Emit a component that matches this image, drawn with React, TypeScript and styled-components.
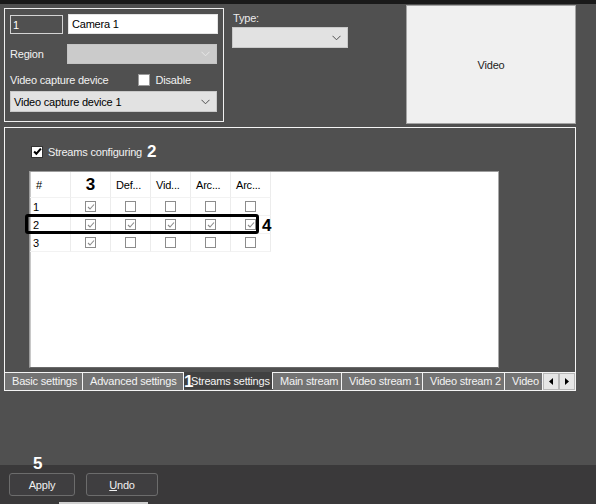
import React from 'react';
import styled, { createGlobalStyle } from 'styled-components';

const GlobalStyle = createGlobalStyle`
  body {
    margin: 0;
    background: #505050;
    font-family: "Liberation Sans", Arial, sans-serif;
    font-size: 11px;
    letter-spacing: -0.2px;
  }
  * { box-sizing: border-box; }
`;

const Window = styled.div`
  width: 596px;
  height: 504px;
  display: flex;
  flex-direction: column;
  background: #505050;
  overflow: hidden;
`;

const TopEdge = styled.div`
  height: 4px;
  background: #1a1a1a;
`;

const TopRow = styled.div`
  display: flex;
  align-items: flex-start;
  margin-top: 1px;
  height: 119px;
`;

const GroupBox = styled.div`
  margin: 3px 0 0 4px;
  width: 220px;
  height: 114px;
  border: 1px solid #f0f0f0;
  padding: 5px 0 0 5px;
  display: flex;
  flex-direction: column;
`;

const FieldRow = styled.div<{ $top?: number }>`
  display: flex;
  align-items: center;
  margin-top: ${p => p.$top ?? 0}px;
`;

const Label = styled.span<{ $width?: number }>`
  color: #f2f2f2;
  font-size: 11px;
  width: ${p => (p.$width ? `${p.$width}px` : 'auto')};
  white-space: nowrap;
`;

const IdBox = styled.div`
  width: 53px;
  height: 19px;
  border: 1px solid #d4d4d4;
  color: #fff;
  font-size: 11px;
  padding: 3px 0 0 2px;
  margin-top: 1px;
`;

const NameInput = styled.div`
  width: 150px;
  height: 20px;
  margin-left: 5px;
  background: #fff;
  border: 1px solid #e4e4e4;
  color: #000;
  font-size: 11px;
  padding: 3px 0 0 3px;
`;

const Combo = styled.div<{ $width: number; $disabled?: boolean; $height?: number }>`
  width: ${p => p.$width}px;
  height: ${p => p.$height ?? 20}px;
  background: ${p => (p.$disabled ? '#cbcbcb' : '#e2e2e2')};
  border: 1px solid ${p => (p.$disabled ? '#c4c4c4' : '#c9c9c9')};
  color: #000;
  font-size: 11px;
  display: flex;
  align-items: center;
  justify-content: space-between;
  padding: 0 6px 0 3px;
`;

const Chevron = ({ light }: { light?: boolean }) => (
  <svg width="9" height="6" viewBox="0 0 9 6">
    <polyline points="0.5,0.8 4.5,4.8 8.5,0.8" fill="none" stroke={light ? '#e6e6e6' : '#505050'} strokeWidth="1" />
  </svg>
);

const CheckBoxBox = styled.span<{ $size: number; $tone: 'dark' | 'gray' }>`
  width: ${p => p.$size}px;
  height: ${p => p.$size}px;
  background: #fff;
  border: 1px solid ${p => (p.$tone === 'dark' ? '#333' : '#8c8c8c')};
  display: inline-flex;
  align-items: center;
  justify-content: center;
  flex: none;
`;

const Check = ({ checked, size = 11, tone = 'gray' }: { checked: boolean; size?: number; tone?: 'dark' | 'gray' }) => (
  <CheckBoxBox $size={size} $tone={tone}>
    {checked && (
      <svg width={size - 3} height={size - 3} viewBox="0 0 8 8">
        <polyline
          points="1,4 3,6 7,1.5"
          fill="none"
          stroke={tone === 'dark' ? '#000' : '#8a8a8a'}
          strokeWidth={tone === 'dark' ? 1.8 : 1.1}
        />
      </svg>
    )}
  </CheckBoxBox>
);

const DisableCheck = styled.span`
  width: 12px;
  height: 12px;
  background: #fff;
  border: 1px solid #9a9a9a;
  margin: 0 6px 0 29px;
`;

const TypeColumn = styled.div`
  margin: 7px 0 0 8px;
  display: flex;
  flex-direction: column;
`;

const TypeLabel = styled.span`
  color: #ececec;
  font-size: 11px;
  height: 15px;
  padding-left: 1px;
`;

const VideoBox = styled.div`
  margin: 0 20px 0 auto;
  width: 170px;
  height: 119px;
  background: #f0f0f0;
  border: 1px solid #a4a4a4;
  display: flex;
  align-items: center;
  justify-content: center;
  color: #222;
  font-size: 11px;
`;

const StreamsPanel = styled.div`
  margin: 3px 0 0 4px;
  width: 572px;
  height: 264px;
  border: 1px solid #f4f4f4;
  border-bottom: none;
  display: flex;
  flex-direction: column;
`;

const ConfigRow = styled.div`
  display: flex;
  align-items: center;
  margin: 17px 0 0 26px;
  height: 13px;
  gap: 5px;
`;

const Marker = styled.span<{ $size?: number }>`
  color: #fff;
  font-weight: bold;
  font-size: ${p => p.$size ?? 17}px;
  font-family: "Liberation Sans", Arial, sans-serif;
  letter-spacing: 0;
  line-height: 1;
`;

const DarkMarker = styled(Marker)`
  color: #000;
`;

const Table = styled.div`
  margin: 13px 0 0 24px;
  width: 470px;
  height: 197px;
  background: #fff;
  border-top: 1px solid #9c9c9c;
  border-left: 1px solid #9c9c9c;
  border-right: 1px solid #a8a8a8;
  border-bottom: 1px solid #6a6a6a;
  box-shadow: inset 1px 0 0 #c8c8c8;
`;

const GridRow = styled.div<{ $height: number }>`
  position: relative;
  display: grid;
  grid-template-columns: 41px repeat(5, 40px);
  height: ${p => p.$height}px;
  color: #000;
  font-size: 11px;
`;

const Cell = styled.div<{ $center?: boolean; $pad?: number }>`
  display: flex;
  align-items: center;
  justify-content: ${p => (p.$center ? 'center' : 'flex-start')};
  padding-left: ${p => (p.$center ? 0 : p.$pad ?? 5)}px;
  border-right: 1px solid #ececec;
  border-bottom: 1px solid #f2f2f2;
  white-space: nowrap;
  overflow: hidden;
`;

const Highlight = styled.div`
  position: absolute;
  left: -5px;
  top: -2px;
  width: 234px;
  height: 20px;
  border: 3px solid #000;
  border-radius: 3px;
  pointer-events: none;
`;

const HighlightTag = styled(DarkMarker)`
  position: absolute;
  left: 232px;
  top: 1px;
`;

const TabBar = styled.div`
  margin-top: auto;
  height: 19px;
  display: flex;
  border-top: 1px solid #f4f4f4;
  border-bottom: 1px solid #f4f4f4;
`;

const Tab = styled.div<{ $width: number; $active?: boolean }>`
  position: relative;
  width: ${p => p.$width}px;
  flex: none;
  height: 100%;
  background: ${p => (p.$active ? '#414141' : '#737373')};
  color: #f4f4f4;
  font-size: 11px;
  border-right: 1px solid #f4f4f4;
  margin-top: ${p => (p.$active ? -1 : 0)}px;
  padding: ${p => (p.$active ? '3px 0 0 7px' : '2px 0 0 7px')};
  white-space: nowrap;
  overflow: hidden;
`;

const TabTag = styled(Marker)`
  position: absolute;
  left: 0;
  top: 1px;
`;

const ScrollButtons = styled.div`
  display: flex;
  width: 32px;
  flex: none;
`;

const ScrollButton = styled.div`
  width: 16px;
  height: 100%;
  background: #e6e6e6;
  border: 1px solid #b8b8b8;
  display: flex;
  align-items: center;
  justify-content: center;
`;

const Arrow = ({ dir }: { dir: 'left' | 'right' }) => (
  <svg width="4" height="7" viewBox="0 0 4 7">
    <polygon points={dir === 'left' ? '4,0 0,3.5 4,7' : '0,0 4,3.5 0,7'} fill="#000" />
  </svg>
);

const Filler = styled.div`
  flex: 1;
`;

const BottomBar = styled.div`
  position: relative;
  height: 39px;
  background: #3a393a;
  display: flex;
  flex-direction: column;
  padding: 8px 0 0 9px;
`;

const ButtonRow = styled.div`
  display: flex;
  gap: 11px;
`;

const Button = styled.div<{ $width: number }>`
  width: ${p => p.$width}px;
  height: 23px;
  background: #3f3e40;
  border: 1px solid #6c6c6c;
  border-radius: 3px;
  color: #f0f0f0;
  font-size: 11px;
  display: flex;
  align-items: center;
  justify-content: center;

  u { text-decoration: underline; }
`;

const StepTag = styled(Marker)`
  position: absolute;
  left: 33px;
  top: -10px;
`;

const BottomStrip = styled.div`
  margin: auto 0 0 50px;
  width: 89px;
  height: 2px;
  background: #cfcfcf;
`;

const rows = [
  [true, false, false, false, false],
  [true, true, true, true, true],
  [true, false, false, false, false],
];

const headers = ['Def...', 'Vid...', 'Arc...', 'Arc...'];

const tabs = [
  { label: 'Basic settings', width: 78 },
  { label: 'Advanced settings', width: 101 },
  { label: 'Streams settings', width: 89, active: true },
  { label: 'Main stream', width: 69 },
  { label: 'Video stream 1', width: 81 },
  { label: 'Video stream 2', width: 82 },
  { label: 'Video stream 3', width: 38 },
];

const App = () => {
  return (
    <Window>
      <GlobalStyle />
      <TopEdge />
      <TopRow>
        <GroupBox>
          <FieldRow>
            <IdBox>1</IdBox>
            <NameInput>Camera 1</NameInput>
          </FieldRow>
          <FieldRow $top={10}>
            <Label $width={57}>Region</Label>
            <Combo $width={150} $disabled>
              <span />
              <Chevron light />
            </Combo>
          </FieldRow>
          <FieldRow $top={10}>
            <Label>Video capture device</Label>
            <DisableCheck />
            <Label>Disable</Label>
          </FieldRow>
          <FieldRow $top={5}>
            <Combo $width={207} $height={21}>
              <span>Video capture device 1</span>
              <Chevron />
            </Combo>
          </FieldRow>
        </GroupBox>
        <TypeColumn>
          <TypeLabel>Type:</TypeLabel>
          <Combo $width={116} $height={21}>
            <span />
            <Chevron />
          </Combo>
        </TypeColumn>
        <VideoBox>Video</VideoBox>
      </TopRow>

      <StreamsPanel>
        <ConfigRow>
          <Check checked size={12} tone="dark" />
          <Label>Streams configuring</Label>
          <Marker>2</Marker>
        </ConfigRow>
        <Table>
          <GridRow $height={26}>
            <Cell $pad={6}>#</Cell>
            <Cell $center>
              <DarkMarker>3</DarkMarker>
            </Cell>
            {headers.map((h, i) => (
              <Cell key={i}>{h}</Cell>
            ))}
          </GridRow>
          {rows.map((row, r) => (
            <GridRow $height={18} key={r}>
              <Cell $pad={3}>{r + 1}</Cell>
              {row.map((c, i) => (
                <Cell $center key={i}>
                  <Check checked={c} />
                </Cell>
              ))}
              {r === 1 && (
                <>
                  <Highlight />
                  <HighlightTag>4</HighlightTag>
                </>
              )}
            </GridRow>
          ))}
        </Table>
        <TabBar>
          {tabs.map(t => (
            <Tab key={t.label} $width={t.width} $active={t.active}>
              {t.active && <TabTag>1</TabTag>}
              {t.label}
            </Tab>
          ))}
          <ScrollButtons>
            <ScrollButton>
              <Arrow dir="left" />
            </ScrollButton>
            <ScrollButton>
              <Arrow dir="right" />
            </ScrollButton>
          </ScrollButtons>
        </TabBar>
      </StreamsPanel>

      <Filler />
      <BottomBar>
        <StepTag>5</StepTag>
        <ButtonRow>
          <Button $width={66}>Apply</Button>
          <Button $width={72}>
            <u>U</u>ndo
          </Button>
        </ButtonRow>
        <BottomStrip />
      </BottomBar>
    </Window>
  );
};

export default App;
